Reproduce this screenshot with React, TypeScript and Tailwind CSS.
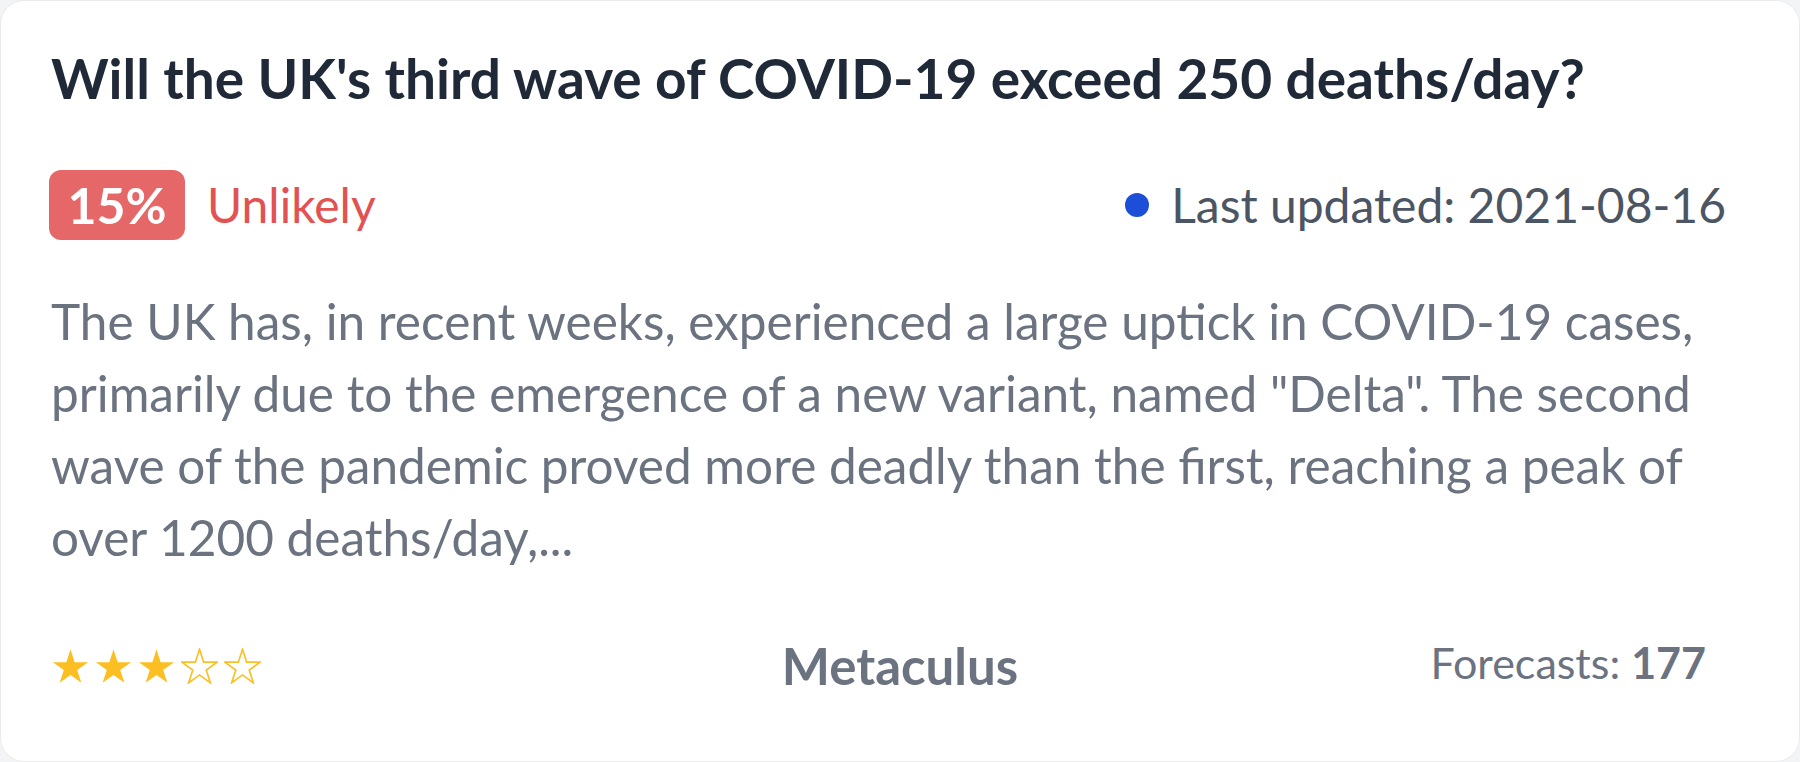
import React from "react";

const STAR_POINTS =
  "50,2.5 61.23,37.05 97.55,37.05 68.17,58.4 79.39,92.95 50,71.6 20.61,92.95 31.83,58.4 2.45,37.05 38.77,37.05";

function Star({ filled }: { filled: boolean }) {
  return (
    <svg width="37" height="36" viewBox="0 0 100 95" className="block">
      <polygon
        points={STAR_POINTS}
        fill={filled ? "#fbbf24" : "none"}
        stroke="#fbbf24"
        strokeWidth={filled ? 0 : 4.5}
        strokeLinejoin="miter"
      />
    </svg>
  );
}

export default function App() {
  const font = { fontFamily: "Lato, 'Open Sans', sans-serif" };
  return (
    <div className="w-[1800px] h-[762px] bg-[#f3f4f6]" style={font}>
      <div className="h-[762px] rounded-[24px] border border-[#ebebeb] bg-white px-[50px] pt-[42px] flex flex-col">
        <h1 className="text-[55px] leading-[70px] font-bold text-[#1f2937] whitespace-nowrap">
          Will the UK's third wave of COVID-19 exceed 250 deaths/day?
        </h1>

        <div className="mt-[57px] flex items-center justify-between h-[70px]">
          <div className="flex items-center h-[70px]">
            <div className="-ml-[2px] w-[136px] h-[70px] rounded-[12px] bg-[#e66767] flex items-center justify-center">
              <span className="text-[50px] leading-[70px] font-bold text-white">15%</span>
            </div>
            <span className="ml-[22px] text-[48px] leading-[70px] text-[#e25252]">Unlikely</span>
          </div>
          <div className="flex items-center mr-[23px]">
            <span className="w-[24px] h-[24px] rounded-full bg-[#1d4ed8]" />
            <span className="ml-[22px] text-[48px] leading-[70px] text-[#4b5563]">
              Last updated: 2021-08-16
            </span>
          </div>
        </div>

        <p className="mt-[45px] text-[49.5px] leading-[72px] text-[#6b7280] whitespace-nowrap">
          The UK has, in recent weeks, experienced a large uptick in COVID-19 cases,
          <br />
          primarily due to the emergence of a new variant, named "Delta". The second
          <br />
          wave of the pandemic proved more deadly than the first, reaching a peak of
          <br />
          over 1200 deaths/day,...
        </p>

        <div className="mt-[64px] grid grid-cols-3 items-center h-[52px]">
          <div className="flex items-center gap-[6px] pl-[1px]">
            <Star filled />
            <Star filled />
            <Star filled />
            <Star filled={false} />
            <Star filled={false} />
          </div>
          <div className="flex justify-center">
            <span className="text-[51px] leading-[52px] font-bold text-[#6b7280]">Metaculus</span>
          </div>
          <div className="flex justify-end pr-[43px]">
            <span className="mb-[5px] text-[43px] leading-[52px] text-[#6b7280]">
              Forecasts: <span className="font-bold">177</span>
            </span>
          </div>
        </div>
      </div>
    </div>
  );
}
